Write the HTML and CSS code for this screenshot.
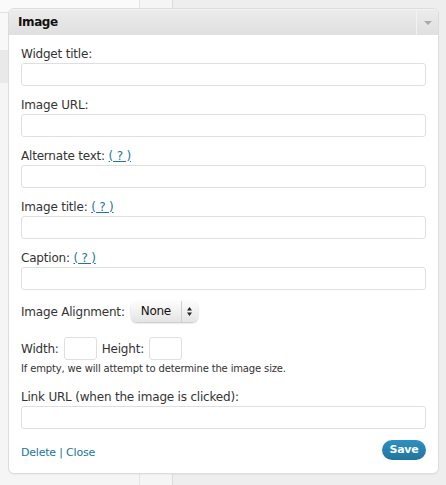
FILE: index.html
```html
<!DOCTYPE html>
<html>
<head>
<meta charset="utf-8">
<link rel="stylesheet" href="styles.css">
</head>
<body>
<div class="backdrop">
  <div class="col-left">
    <div class="lt-top"></div>
    <div class="lt-row"></div>
    <div class="lt-band"></div>
    <div class="lt-rest"></div>
  </div>
  <div class="col-mid"></div>
  <div class="col-right"></div>
</div>

<div class="widget">
  <div class="widget-top">
    <h3 class="widget-title">Image</h3>
    <div class="widget-toggle"><span class="arrow"></span></div>
  </div>
  <div class="widget-inside">
    <div class="field">
      <label class="lbl">Widget title:</label>
      <input class="txt" type="text">
    </div>
    <div class="field">
      <label class="lbl">Image URL:</label>
      <input class="txt" type="text">
    </div>
    <div class="field">
      <label class="lbl">Alternate text: <a class="help" href="#">( ? )</a></label>
      <input class="txt" type="text">
    </div>
    <div class="field">
      <label class="lbl">Image title: <a class="help" href="#">( ? )</a></label>
      <input class="txt" type="text">
    </div>
    <div class="field">
      <label class="lbl">Caption: <a class="help" href="#">( ? )</a></label>
      <input class="txt" type="text">
    </div>

    <div class="align-row">
      <span class="lbl">Image Alignment:</span>
      <div class="select">
        <span class="sel-val">None</span>
        <span class="sel-arrows">
          <svg width="5" height="9" viewBox="0 0 5 9"><path d="M2.5 0 L5 3.5 L0 3.5 Z M2.5 9 L5 5.5 L0 5.5 Z" fill="#222"/></svg>
        </span>
      </div>
    </div>

    <div class="size-row">
      <span class="lbl">Width:</span>
      <input class="small-in" type="text">
      <span class="lbl">Height:</span>
      <input class="small-in" type="text">
    </div>
    <p class="note">If empty, we will attempt to determine the image size.</p>

    <div class="field">
      <label class="lbl">Link URL (when the image is clicked):</label>
      <input class="txt" type="text">
    </div>

    <div class="controls">
      <div class="links"><a href="#">Delete</a> | <a href="#">Close</a></div>
      <button class="save">Save</button>
    </div>
  </div>
</div>
</body>
</html>
```
FILE: styles.css
```css
* { box-sizing: border-box; }
html, body { margin: 0; padding: 0; }
body {
  width: 446px;
  height: 485px;
  position: relative;
  overflow: hidden;
  background: #f1f1f1;
  font-family: "DejaVu Sans", sans-serif;
  color: #333;
}

/* background page */
.backdrop {
  display: flex;
  height: 485px;
}
.col-left {
  width: 139px;
  display: flex;
  flex-direction: column;
  background: #f6f6f6;
}
.lt-top { height: 13px; background: #fafafa; border-bottom: 1px solid #e2e2e2; }
.lt-row { height: 37px; background: #f8f8f8; }
.lt-band { height: 33px; background: #e9e9e9; }
.lt-rest { flex: 1; background: #f5f5f5; }
.col-mid {
  width: 34px;
  background: #f5f5f5;
  border-left: 1px solid #e4e4e4;
  border-right: 1px solid #dcdcdc;
}
.col-right { flex: 1; background: #eeeeee; }

/* widget */
.widget {
  position: absolute;
  left: 8px;
  top: 8px;
  width: 431px;
  height: 466px;
  border: 1px solid #dcdcdc;
  border-radius: 6px;
  background: #fff;
  box-shadow: 0 1px 1px rgba(0,0,0,0.04);
  overflow: hidden;
}
.widget-top {
  height: 26px;
  display: flex;
  align-items: stretch;
  background: linear-gradient(#ececec, #dfdfdf);
  border-top: 1px solid #f4f4f4;
}
.widget-title {
  flex: 1;
  margin: 0;
  padding: 0 0 0 9px;
  font-size: 12px;
  font-weight: bold;
  letter-spacing: -0.4px;
  line-height: 25px;
  color: #111;
}
.widget-toggle {
  width: 22px;
  border-left: 1px solid #f2f2f2;
  display: flex;
  align-items: center;
  justify-content: center;
}
.arrow {
  width: 0;
  height: 0;
  border-left: 4px solid transparent;
  border-right: 4px solid transparent;
  border-top: 4px solid #aaa;
}

.widget-inside {
  padding: 11px 12px 0 12px;
}
.lbl {
  display: block;
  font-size: 12px;
  line-height: 16px;
  letter-spacing: -0.2px;
  color: #333;
}
.help {
  color: #21759b;
  text-decoration: underline;
}
.field {
  display: flex;
  flex-direction: column;
  gap: 1px;
  margin-bottom: 11px;
}
.txt {
  display: block;
  width: 405px;
  height: 23px;
  margin: 0;
  border: 1px solid #dfdfdf;
  border-radius: 3px;
  background: #fff;
  padding: 2px 4px;
  font: inherit;
}

.align-row {
  display: flex;
  align-items: center;
  gap: 6px;
  margin-top: 3px;
  height: 21px;
}
.select {
  width: 67px;
  height: 21px;
  display: flex;
  align-items: stretch;
  border-radius: 6px;
  background: linear-gradient(#fdfdfd, #e4e4e4);
  box-shadow: 0 1px 2px rgba(0,0,0,0.25);
}
.sel-val {
  flex: 1;
  padding-left: 10px;
  font-size: 12px;
  line-height: 21px;
  color: #111;
  letter-spacing: -0.3px;
}
.sel-arrows {
  width: 17px;
  border-left: 1px solid #cfcfcf;
  display: flex;
  align-items: center;
  justify-content: center;
}

.size-row {
  display: flex;
  align-items: center;
  gap: 5px;
  margin-top: 15px;
  height: 23px;
}
.small-in {
  width: 33px;
  height: 23px;
  margin: 0;
  border: 1px solid #dfdfdf;
  border-radius: 3px;
  background: #fff;
}
.note {
  margin: 3px 0 14px 0;
  font-size: 10px;
  line-height: 12px;
  letter-spacing: -0.15px;
  color: #333;
}

.controls {
  display: flex;
  justify-content: space-between;
  align-items: flex-start;
  margin-top: 7px;
}
.links {
  padding-top: 5px;
  font-size: 11px;
  line-height: 16px;
  letter-spacing: -0.2px;
  color: #21759b;
}
.links a { color: #21759b; text-decoration: none; }
.save {
  width: 44px;
  height: 20px;
  margin: 0;
  padding: 0;
  border: none;
  border-radius: 11px;
  background: linear-gradient(#2e90c4, #21759b);
  color: #fff;
  font-family: "DejaVu Sans", sans-serif;
  font-size: 11px;
  font-weight: bold;
  letter-spacing: -0.2px;
  line-height: 20px;
}
```
